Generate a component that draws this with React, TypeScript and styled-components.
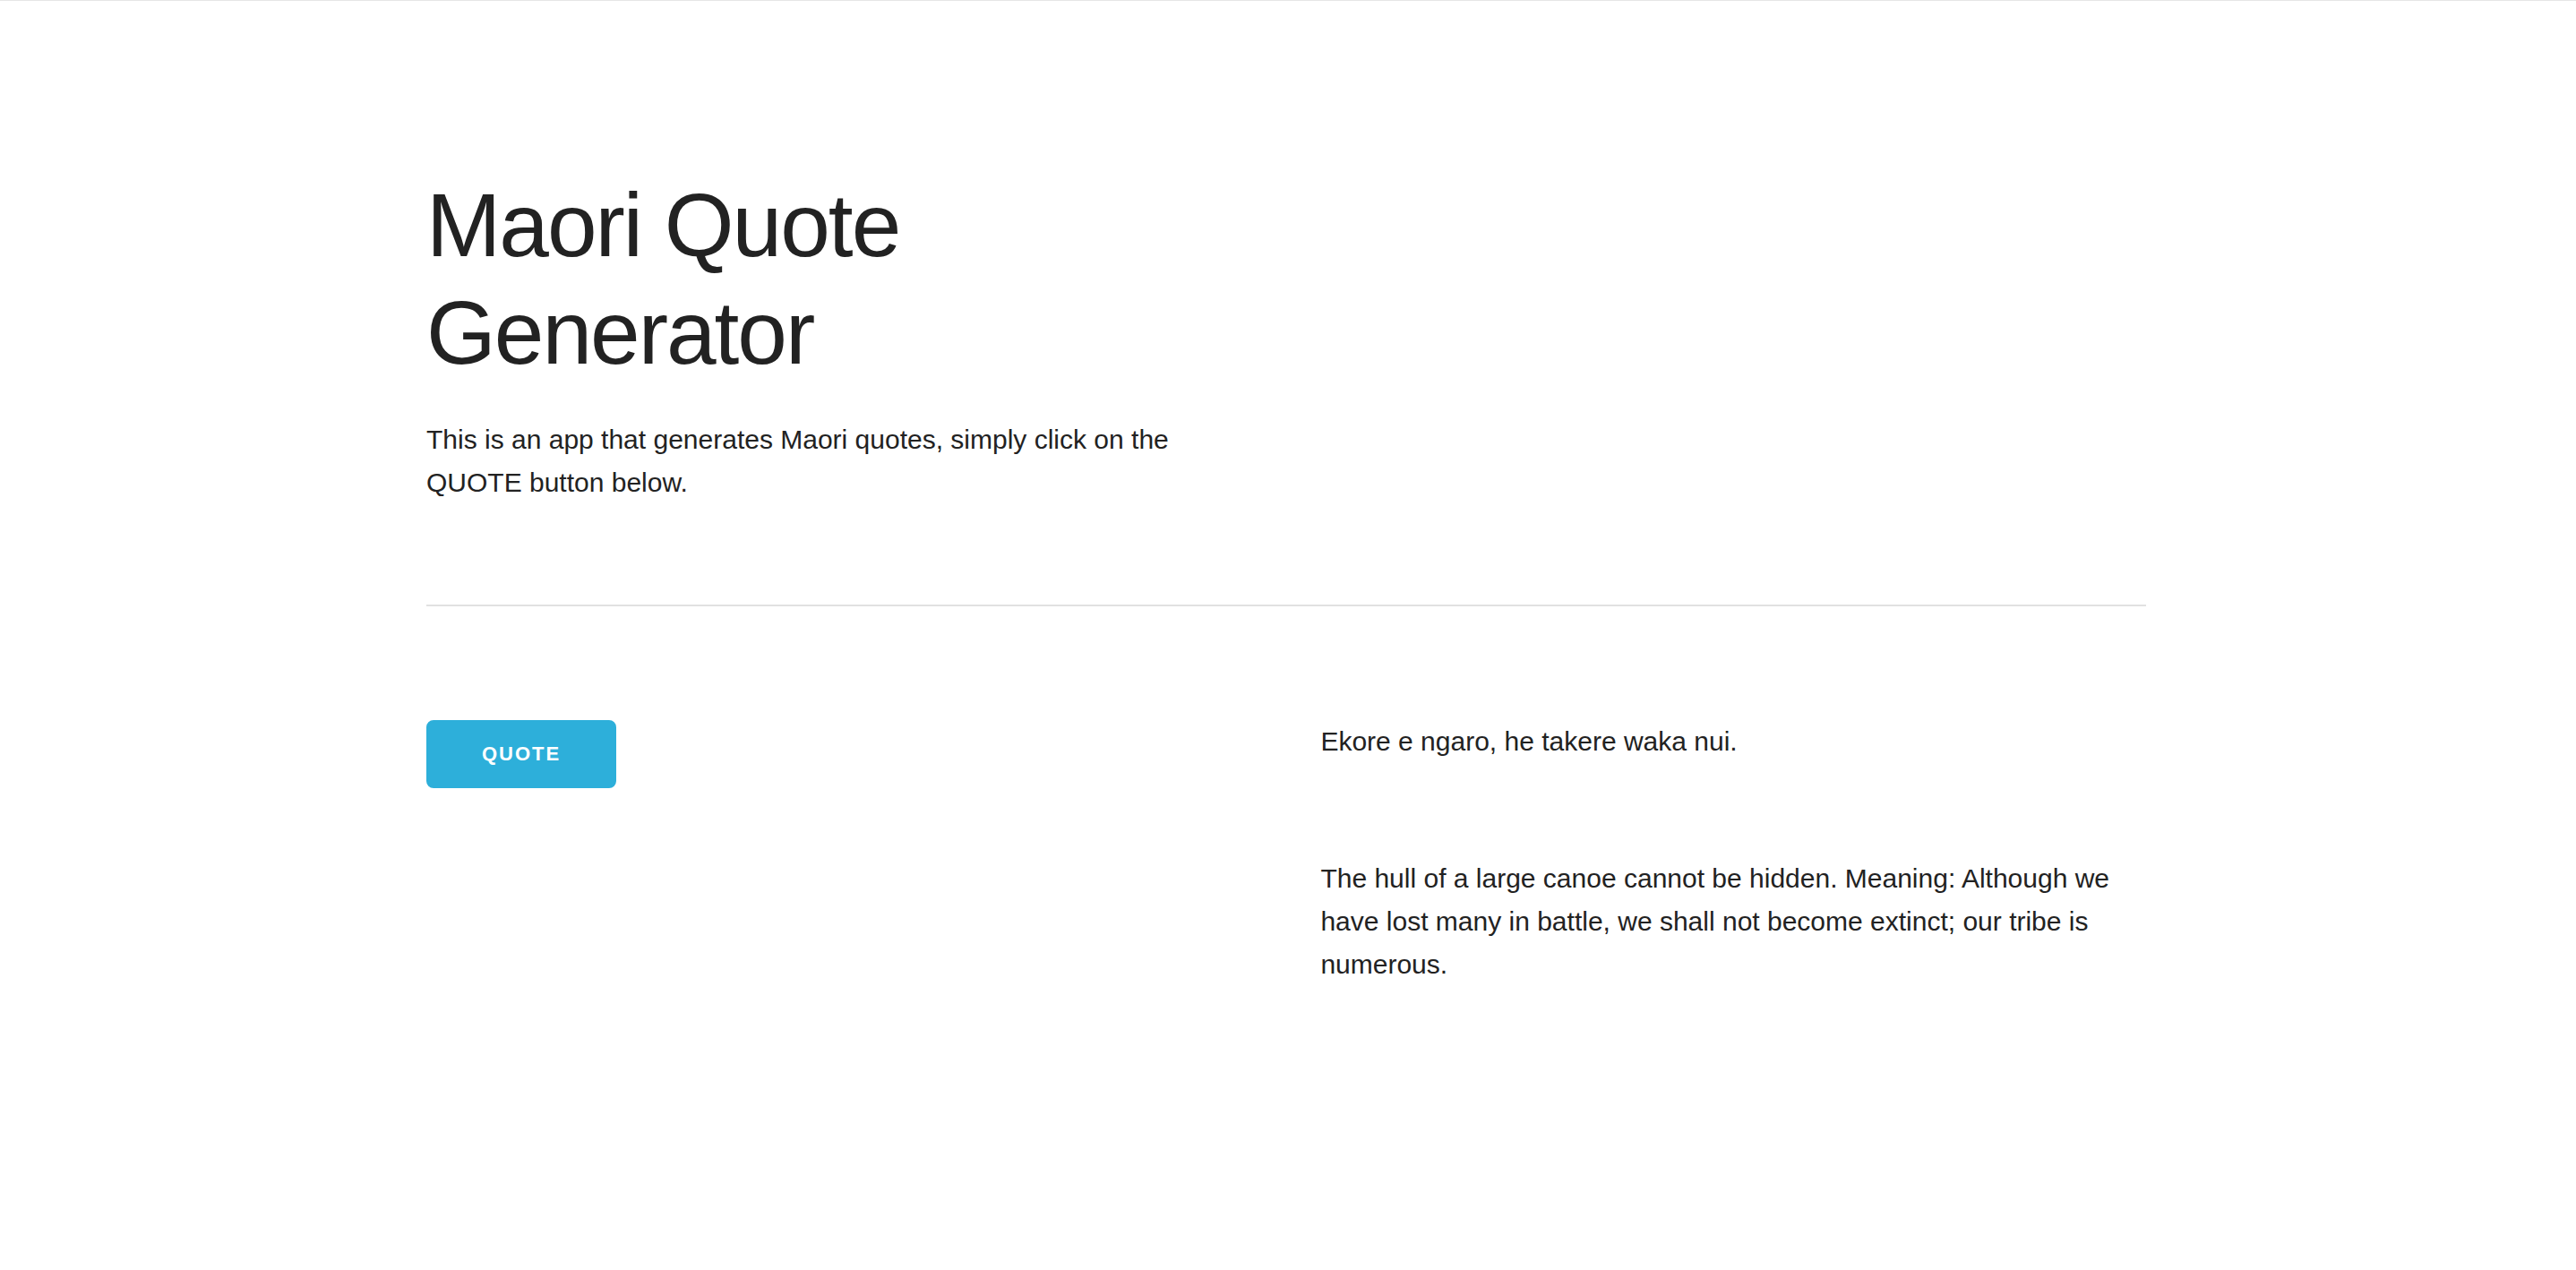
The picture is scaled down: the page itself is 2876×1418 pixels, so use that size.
import React from "react";
import styled, { createGlobalStyle } from "styled-components";

const GlobalStyle = createGlobalStyle`
  html, body {
    margin: 0;
    padding: 0;
    background: #ffffff;
  }
  body {
    border-top: 1px solid #e6e6e6;
    font-family: "Liberation Sans", Arial, Helvetica, sans-serif;
    color: #222222;
    padding-right: 4px;
  }
  * { box-sizing: border-box; }
`;

const Container = styled.main`
  max-width: 1920px;
  margin: 0 auto;
  padding-top: 190px;
  padding-bottom: 200px;
`;

const Header = styled.header`
  width: 48%;
`;

const Title = styled.h1`
  margin: 0 0 36px 0;
  font-family: "Liberation Sans", Arial, Helvetica, sans-serif;
  font-size: 100px;
  line-height: 120px;
  font-weight: 400;
  letter-spacing: -2px;
  color: #222222;
`;

const Text = styled.p<{ $gap?: number }>`
  margin: 0 0 ${(p) => p.$gap ?? 0}px 0;
  font-size: 30px;
  line-height: 48px;
  color: #222222;
`;

const Divider = styled.hr`
  margin: 112px 0 127px 0;
  border: 0;
  border-top: 2px solid #e1e1e1;
  height: 0;
`;

const Row = styled.section`
  display: grid;
  grid-template-columns: 1fr 1fr;
  column-gap: 4%;
  align-items: start;
`;

const Column = styled.div`
  display: flex;
  flex-direction: column;
  align-items: flex-start;
`;

const QuoteButton = styled.button`
  height: 76px;
  padding: 0 60px;
  background: #2dafda;
  border: 2px solid #2dafda;
  border-radius: 8px;
  color: #ffffff;
  font-family: "Liberation Sans", Arial, Helvetica, sans-serif;
  font-size: 22px;
  font-weight: 700;
  letter-spacing: 2px;
  text-transform: uppercase;
  line-height: 72px;
  cursor: pointer;
`;

const quote = {
  maori: "Ekore e ngaro, he takere waka nui.",
  english:
    "The hull of a large canoe cannot be hidden. Meaning: Although we have lost many in battle, we shall not become extinct; our tribe is numerous.",
};

export default function App() {
  return (
    <>
      <GlobalStyle />
      <Container>
        <Header>
          <Title>Maori Quote Generator</Title>
          <Text>
            This is an app that generates Maori quotes, simply click on the QUOTE button below.
          </Text>
        </Header>
        <Divider />
        <Row>
          <Column>
            <QuoteButton type="button">Quote</QuoteButton>
          </Column>
          <Column>
            <Text $gap={105}>{quote.maori}</Text>
            <Text>{quote.english}</Text>
          </Column>
        </Row>
      </Container>
    </>
  );
}
